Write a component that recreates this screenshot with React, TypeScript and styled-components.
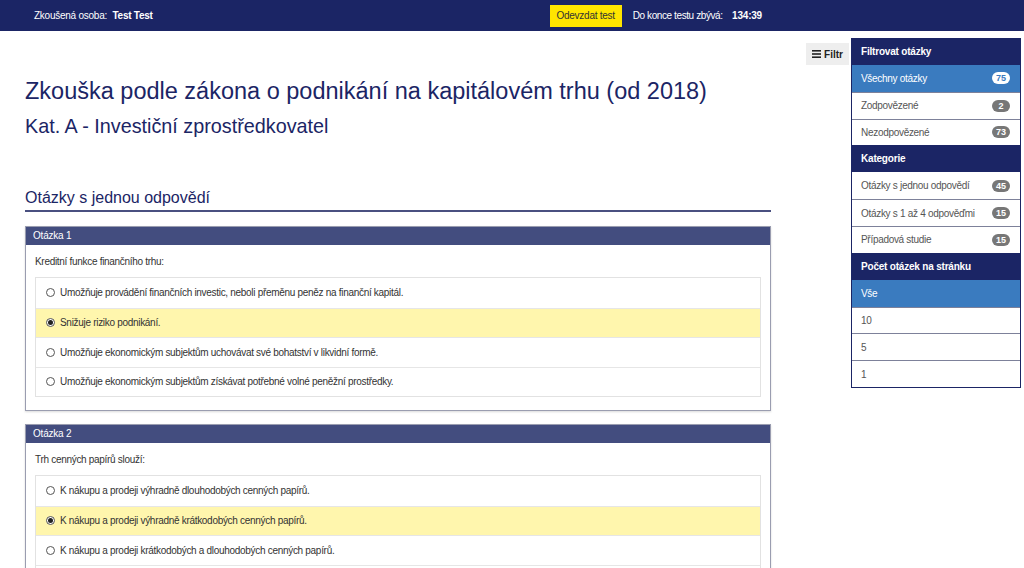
import React from 'react'
import styled, { createGlobalStyle } from 'styled-components'

const GlobalStyle = createGlobalStyle`
  body {
    margin: 0;
    font-family: "Liberation Sans", Arial, sans-serif;
    background: #fff;
    color: #333;
    overflow: hidden;
  }
  * { box-sizing: border-box; }
`;

const TopBar = styled.div`
  height: 31px;
  background: #1b2565;
  color: #fff;
  font-size: 10px;
  letter-spacing: -0.25px;
  display: flex;
  align-items: center;
`;
const TopInner = styled.div`
  width: 762px;
  padding-left: 34px;
  display: flex;
  justify-content: space-between;
  align-items: center;
  b { margin-left: 3px; }
`;
const TopRight = styled.div`
  display: flex;
  align-items: center;
  gap: 11px;
  span { letter-spacing: -0.4px; }
  b { margin-left: 7px; letter-spacing: -0.2px; }
`;
const SubmitButton = styled.button`
  height: 22px;
  width: 72px;
  border: none;
  background: #ffe500;
  color: #333;
  font-family: inherit;
  font-size: 10px;
  letter-spacing: -0.25px;
  padding: 0;
`;

const Layout = styled.div`
  display: flex;
  align-items: flex-start;
`;
const Main = styled.div`
  width: 771px;
  padding-left: 25px;
  padding-top: 45px;
`;
const Title = styled.h1`
  margin: 0;
  font-weight: normal;
  font-size: 23.5px;
  line-height: 30px;
  color: #1b2565;
`;
const Subtitle = styled.h2`
  margin: 8px 0 0;
  font-weight: normal;
  font-size: 19.8px;
  line-height: 24px;
  color: #1b2565;
`;
const Section = styled.h3`
  margin: 50px 0 14px;
  font-weight: normal;
  font-size: 16px;
  line-height: 20px;
  padding-bottom: 2px;
  color: #1b2565;
  border-bottom: 2px solid #4a5080;
`;
const Panel = styled.div`
  border: 1px solid #9a9db0;
  box-shadow: 0 1px 2px rgba(0, 0, 0, 0.15);
  margin-bottom: 13px;
`;
const PanelHead = styled.div`
  height: 18px;
  line-height: 18px;
  padding-left: 7px;
  background: #434d7f;
  color: #fff;
  font-size: 10px;
  letter-spacing: -0.2px;
`;
const PanelBody = styled.div`
  padding: 10px 9px 13px;
  font-size: 10px;
  letter-spacing: -0.3px;
`;
const Question = styled.p`
  margin: 0 0 9px;
  line-height: 13px;
`;
const AnswerList = styled.div`
  border: 1px solid #e2e2e2;
`;
const Answer = styled.div<{ $selected?: boolean }>`
  height: 29.5px;
  display: flex;
  align-items: center;
  padding-left: 10px;
  gap: 5px;
  background: ${p => (p.$selected ? '#fff6ad' : '#fff')};
  & + & { border-top: 1px solid #e6e6e6; }
`;
const Radio = styled.span<{ $checked?: boolean }>`
  width: 9px;
  height: 9px;
  border-radius: 50%;
  border: 1px solid #555;
  background: #fff;
  display: inline-flex;
  align-items: center;
  justify-content: center;
  &::after {
    content: '';
    width: 5px;
    height: 5px;
    border-radius: 50%;
    background: ${p => (p.$checked ? '#222' : 'transparent')};
  }
`;

const Aside = styled.div`
  display: flex;
  align-items: flex-start;
  margin-left: auto;
  margin-right: 3px;
  margin-top: 7px;
`;
const FilterToggle = styled.div`
  margin-top: 5px;
  margin-right: 2px;
  width: 43px;
  height: 22px;
  background: #eee;
  font-size: 10px;
  font-weight: bold;
  color: #222;
  display: flex;
  align-items: center;
  justify-content: center;
  gap: 3px;
`;
const FilterPanel = styled.div`
  width: 170px;
  border: 1px solid #1b2565;
  border-top: none;
`;
const FilterHead = styled.div`
  height: 27px;
  line-height: 27px;
  background: #1b2565;
  color: #fff;
  font-weight: bold;
  font-size: 10px;
  letter-spacing: -0.2px;
  padding-left: 9px;
`;
const FilterRow = styled.div<{ $active?: boolean }>`
  height: 26.8px;
  display: flex;
  align-items: center;
  justify-content: space-between;
  padding: 0 10px 0 9px;
  font-size: 10px;
  letter-spacing: -0.3px;
  background: ${p => (p.$active ? '#3a7bbf' : '#fff')};
  color: ${p => (p.$active ? '#fff' : '#555')};
  & + & { border-top: 1px solid #7d819a; }
`;
const Badge = styled.span<{ $active?: boolean }>`
  min-width: 18px;
  height: 12px;
  padding: 0 4px;
  border-radius: 6px;
  font-size: 9px;
  font-weight: bold;
  letter-spacing: 0;
  line-height: 12px;
  text-align: center;
  background: ${p => (p.$active ? '#fff' : '#777')};
  color: ${p => (p.$active ? '#3a7bbf' : '#fff')};
`;

const questions = [
  {
    n: 1,
    text: 'Kreditní funkce finančního trhu:',
    answers: [
      'Umožňuje provádění finančních investic, neboli přeměnu peněz na finanční kapitál.',
      'Snižuje riziko podnikání.',
      'Umožňuje ekonomickým subjektům uchovávat své bohatství v likvidní formě.',
      'Umožňuje ekonomickým subjektům získávat potřebné volné peněžní prostředky.',
    ],
    selected: 1,
  },
  {
    n: 2,
    text: 'Trh cenných papírů slouží:',
    answers: [
      'K nákupu a prodeji výhradně dlouhodobých cenných papírů.',
      'K nákupu a prodeji výhradně krátkodobých cenných papírů.',
      'K nákupu a prodeji krátkodobých a dlouhodobých cenných papírů.',
      'K nákupu a prodeji cenných papírů na primárním trhu.',
    ],
    selected: 1,
  },
];

const filterGroups = [
  {
    title: 'Filtrovat otázky',
    rows: [
      { label: 'Všechny otázky', count: 75, active: true },
      { label: 'Zodpovězené', count: 2 },
      { label: 'Nezodpovězené', count: 73 },
    ],
  },
  {
    title: 'Kategorie',
    rows: [
      { label: 'Otázky s jednou odpovědí', count: 45 },
      { label: 'Otázky s 1 až 4 odpověďmi', count: 15 },
      { label: 'Případová studie', count: 15 },
    ],
  },
  {
    title: 'Počet otázek na stránku',
    rows: [
      { label: 'Vše', active: true },
      { label: '10' },
      { label: '5' },
      { label: '1' },
    ],
  },
] as { title: string; rows: { label: string; count?: number; active?: boolean }[] }[];

const App = () => {
  return (
    <>
      <GlobalStyle />
      <TopBar>
        <TopInner>
          <span>Zkoušená osoba: <b>Test Test</b></span>
          <TopRight>
            <SubmitButton>Odevzdat test</SubmitButton>
            <span>Do konce testu zbývá: <b>134:39</b></span>
          </TopRight>
        </TopInner>
      </TopBar>
      <Layout>
        <Main>
          <Title>Zkouška podle zákona o podnikání na kapitálovém trhu (od 2018)</Title>
          <Subtitle>Kat. A - Investiční zprostředkovatel</Subtitle>
          <Section>Otázky s jednou odpovědí</Section>
          {questions.map(q => (
            <Panel key={q.n}>
              <PanelHead>Otázka {q.n}</PanelHead>
              <PanelBody>
                <Question>{q.text}</Question>
                <AnswerList>
                  {q.answers.map((a, i) => (
                    <Answer key={i} $selected={i === q.selected}>
                      <Radio $checked={i === q.selected} />
                      {a}
                    </Answer>
                  ))}
                </AnswerList>
              </PanelBody>
            </Panel>
          ))}
        </Main>
        <Aside>
          <FilterToggle>
            <svg width="9" height="8" viewBox="0 0 9 8">
              <rect x="0" y="0" width="9" height="1.6" fill="#222" />
              <rect x="0" y="3.2" width="9" height="1.6" fill="#222" />
              <rect x="0" y="6.4" width="9" height="1.6" fill="#222" />
            </svg>
            Filtr
          </FilterToggle>
          <FilterPanel>
            {filterGroups.map(g => (
              <div key={g.title}>
                <FilterHead>{g.title}</FilterHead>
                {g.rows.map(r => (
                  <FilterRow key={r.label} $active={r.active}>
                    <span>{r.label}</span>
                    {r.count !== undefined && <Badge $active={r.active}>{r.count}</Badge>}
                  </FilterRow>
                ))}
              </div>
            ))}
          </FilterPanel>
        </Aside>
      </Layout>
    </>
  )
}

export default App
